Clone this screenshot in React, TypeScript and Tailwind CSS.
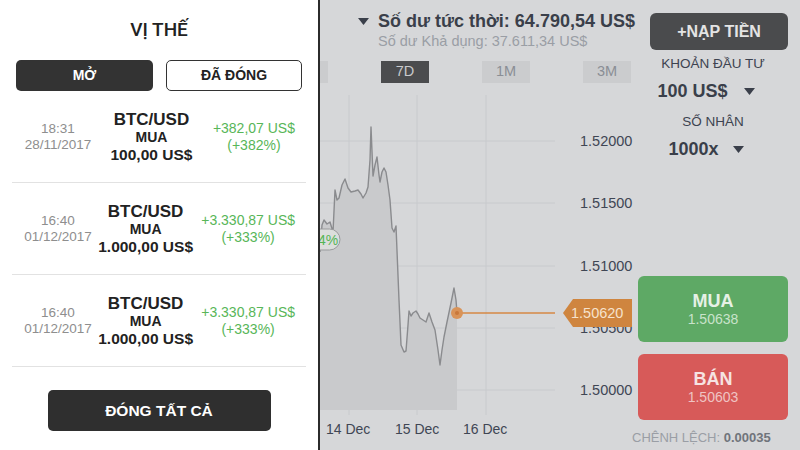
const positions = [
  { time: "18:31", date: "28/11/2017", amount: "100,00 US$", pnl: "+382,07 US$", pct: "(+382%)" },
  { time: "16:40", date: "01/12/2017", amount: "1.000,00 US$", pnl: "+3.330,87 US$", pct: "(+333%)" },
  { time: "16:40", date: "01/12/2017", amount: "1.000,00 US$", pnl: "+3.330,87 US$", pct: "(+333%)" },
];

const pts: [number, number][] = [
  [320, 252], [322, 225], [324, 220], [327, 224], [330, 222], [333, 232], [335, 190], [337, 200],
  [339, 198], [342, 185], [345, 179], [348, 188], [351, 192], [355, 191], [358, 190], [361, 194],
  [363, 198], [366, 193], [368, 187], [370, 160], [371, 127], [373, 176], [375, 165], [377, 157],
  [379, 175], [380, 182], [382, 172], [384, 168], [386, 172], [388, 185], [390, 200], [392, 228],
  [394, 232], [396, 226], [399, 300], [401, 345], [404, 352], [406, 351], [408, 325], [409, 311],
  [411, 316], [413, 313], [416, 311], [418, 314], [420, 318], [423, 320], [426, 322], [429, 313],
  [432, 322], [435, 330], [438, 350], [440, 365], [442, 350], [444, 337], [447, 322], [451, 303],
  [454, 288], [456, 300], [457, 313],
];

function Caret({ className }: { className?: string }) {
  return (
    <svg width="11" height="7" viewBox="0 0 11 7" className={className}>
      <path d="M0 0 L11 0 L5.5 7 Z" fill="currentColor" />
    </svg>
  );
}

function Chart() {
  const line = pts.map((p, i) => (i ? "L" : "M") + p[0] + " " + p[1]).join(" ");
  const area = line + " L457 410 L320 410 Z";
  const levels = [
    { y: 141, label: "1.52000" },
    { y: 203, label: "1.51500" },
    { y: 266, label: "1.51000" },
    { y: 328, label: "1.50500" },
    { y: 390, label: "1.50000" },
  ];
  return (
    <svg width="318" height="367" viewBox="320 83 318 367" className="block">
      {[349, 417, 486].map((x) => (
        <line key={x} x1={x} y1={95} x2={x} y2={415} stroke="#c8cacd" strokeWidth="1" />
      ))}
      {levels.map((l) => (
        <line key={l.y} x1={320} y1={l.y} x2={555} y2={l.y} stroke="#c8cacd" strokeWidth="1" />
      ))}
      <path d={area} fill="#c9cacc" />
      <path d={line} fill="none" stroke="#8a8b8e" strokeWidth="1.4" strokeLinejoin="round" />
      <rect x={296} y={229} width={44} height={21} rx={10.5} fill="#dcdedc" stroke="#9a9b9d" strokeWidth="1" />
      <text x={318} y={245} fontSize="14" fill="#55b555" fontFamily="Liberation Sans, sans-serif">4%</text>
      <line x1={457} y1={313} x2={555} y2={313} stroke="#d68945" strokeWidth="1.5" />
      <circle cx={457} cy={313} r={6} fill="#d99358" />
      <circle cx={457} cy={313} r={2} fill="#c9783a" />
      {levels.map((l) => (
        <text key={l.label} x={580} y={l.y + 5} fontSize="14.5" fill="#3f4654" fontFamily="Liberation Sans, sans-serif">
          {l.label}
        </text>
      ))}
      <path d="M563 313 L573 299 L632 299 L632 327 L573 327 Z" fill="#cf853f" />
      <text x={571} y={318} fontSize="14.5" fill="#f6e2cc" fontFamily="Liberation Sans, sans-serif">1.50620</text>
      <text x={326} y={434} fontSize="14" fill="#3f4654" fontFamily="Liberation Sans, sans-serif">14 Dec</text>
      <text x={395} y={434} fontSize="14" fill="#3f4654" fontFamily="Liberation Sans, sans-serif">15 Dec</text>
      <text x={463} y={434} fontSize="14" fill="#3f4654" fontFamily="Liberation Sans, sans-serif">16 Dec</text>
    </svg>
  );
}

export default function App() {
  return (
    <div className="w-[800px] h-[450px] flex overflow-hidden font-['Liberation_Sans',sans-serif]">
      {/* positions panel */}
      <div className="w-[318px] shrink-0 bg-white flex flex-col">
        <div className="h-[60px] flex items-center justify-center font-['Roboto',sans-serif] text-[19px] font-medium text-[#222]">VỊ THẾ</div>
        <div className="flex px-4 gap-[13px] h-[31px]">
          <div className="w-[137px] rounded-[5px] bg-[#333] text-white text-[14px] font-bold flex items-center justify-center">MỞ</div>
          <div className="w-[136px] rounded-[5px] border border-[#333] text-[#222] text-[14px] font-bold flex items-center justify-center">ĐÃ ĐÓNG</div>
        </div>
        <div className="flex flex-col">
          {positions.map((p, i) => (
            <div key={i} className="h-[92px] mx-3 border-b border-[#e2e2e2] flex items-center pl-2 pr-[11px]">
              <div className="w-[76px] flex flex-col items-center text-[13.5px] leading-[16px] text-[#8e8e8e]">
                <span>{p.time}</span>
                <span>{p.date}</span>
              </div>
              <div className="flex-1 pr-[6px] flex flex-col items-center text-[#222] whitespace-nowrap">
                <span className="text-[17px] leading-[19px] font-bold">BTC/USD</span>
                <span className="text-[14px] leading-[17px] font-bold">MUA</span>
                <span className="text-[15.5px] leading-[18px] font-bold">{p.amount}</span>
              </div>
              <div className="flex flex-col items-center text-[14px] leading-[17px] text-[#58b658] whitespace-nowrap">
                <span>{p.pnl}</span>
                <span>{p.pct}</span>
              </div>
            </div>
          ))}
        </div>
        <div className="mt-[23px] mx-auto w-[223px] h-[41px] rounded-[5px] bg-[#2f2f2f] text-white text-[15.5px] font-bold flex items-center justify-center">
          ĐÓNG TẤT CẢ
        </div>
      </div>
      <div className="w-[2px] shrink-0 bg-[#2b2b2b]" />

      {/* dimmed trading view */}
      <div className="w-[480px] shrink-0 flex bg-[#d6d7d9]">
        <div className="w-[318px] shrink-0 flex flex-col">
          <div className="pt-[10px] pl-[38px] flex items-center gap-[9px] text-[#3a3f4a]">
            <Caret />
            <span className="text-[18px] leading-[22px] font-bold whitespace-nowrap">Số dư tức thời: 64.790,54 US$</span>
          </div>
          <div className="pl-[58px] text-[14.5px] leading-[18px] text-[#9a9ea5] whitespace-nowrap">Số dư Khả dụng: 37.611,34 US$</div>
          <div className="mt-[11px] h-[22px] flex gap-[53px] text-[14.5px]">
            <div className="w-[8px] bg-[#cbccce]" />
            <div className="w-[48px] bg-[#4b4c4e] text-[#c9cacc] flex items-center justify-center">7D</div>
            <div className="w-[48px] bg-[#cbccce] text-[#8a8e95] flex items-center justify-center">1M</div>
            <div className="w-[48px] bg-[#cbccce] text-[#8a8e95] flex items-center justify-center">3M</div>
          </div>
          <Chart />
        </div>

        <div className="w-[162px] shrink-0 flex flex-col items-start">
          <div className="mt-[13px] ml-3 w-[138px] h-[37px] rounded-[6px] bg-[#4a4b4d] text-[#e4e4e4] text-[16px] font-bold flex items-center justify-center">
            +NẠP TIỀN
          </div>
          <div className="mt-[5px] w-[150px] text-center text-[13.5px] leading-[18px] text-[#3d4350]">KHOẢN ĐẦU TƯ</div>
          <div className="mt-[6px] w-[150px] pr-[14px] h-[24px] flex items-center justify-center gap-[16px] text-[#3a3f4a]">
            <span className="text-[18px] font-bold">100 US$</span>
            <Caret />
          </div>
          <div className="mt-[10px] w-[150px] text-center text-[13.5px] leading-[18px] text-[#3d4350]">SỐ NHÂN</div>
          <div className="mt-[6px] w-[150px] pr-[14px] h-[24px] flex items-center justify-center gap-[14px] text-[#3a3f4a]">
            <span className="text-[18px] font-bold">1000x</span>
            <Caret />
          </div>
          <div className="mt-[115px] w-[150px] h-[66px] rounded-[6px] bg-[#5ea965] flex flex-col items-center justify-center">
            <span className="text-[18px] leading-[20px] font-bold text-[#e6f1e6]">MUA</span>
            <span className="text-[14px] leading-[17px] text-[#c9e3cb]">1.50638</span>
          </div>
          <div className="mt-[12px] w-[150px] h-[66px] rounded-[6px] bg-[#d75a59] flex flex-col items-center justify-center">
            <span className="text-[18px] leading-[20px] font-bold text-[#f6e3e2]">BÁN</span>
            <span className="text-[14px] leading-[17px] text-[#efc4c3]">1.50603</span>
          </div>
          <div className="mt-[10px] leading-[16px] text-[13px] text-[#9a9ea5] whitespace-nowrap -ml-[6px]">
            CHÊNH LỆCH: <span className="font-bold text-[#70747b]">0.00035</span>
          </div>
        </div>
      </div>
    </div>
  );
}
